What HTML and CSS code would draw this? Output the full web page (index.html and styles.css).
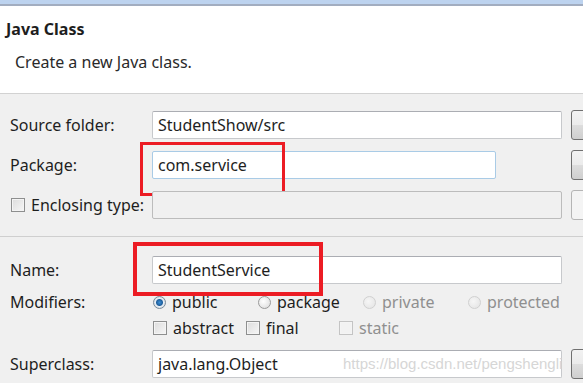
FILE: index.html
```html
<!DOCTYPE html>
<html lang="en">
<head>
    <meta charset="UTF-8">
    <title>New Java Class</title>
    <link rel="stylesheet" href="styles.css">
</head>
<body>
    <div class="titlebar"></div>

    <div class="header">
        <div class="header-title">Java Class</div>
        <div class="header-desc">Create a new Java class.</div>
    </div>

    <div class="group first">
        <div class="row">
            <div class="label">Source folder:</div>
            <div class="field"><div class="input">StudentShow/src</div></div>
            <div class="btn"></div>
        </div>
        <div class="row">
            <div class="label">Package:</div>
            <div class="field">
                <div class="input short focus">com.service</div>
                <div class="mark mark-package"></div>
            </div>
            <div class="btn"></div>
        </div>
        <div class="row">
            <div class="label"><span class="check"></span>Enclosing type:</div>
            <div class="field"><div class="input disabled"></div></div>
            <div class="btn disabled"></div>
        </div>
    </div>

    <div class="group second">
        <div class="row name">
            <div class="label">Name:</div>
            <div class="field">
                <div class="input">StudentService</div>
                <div class="mark mark-name"></div>
            </div>
        </div>
        <div class="row small">
            <div class="label">Modifiers:</div>
            <div class="options">
                <span class="radio-item"><span class="radio on"></span>public</span>
                <span class="radio-item"><span class="radio"></span>package</span>
                <span class="radio-item off"><span class="radio"></span>private</span>
                <span class="radio-item off"><span class="radio"></span>protected</span>
            </div>
        </div>
        <div class="row small">
            <div class="label"></div>
            <div class="options">
                <span class="check-item"><span class="check"></span>abstract</span>
                <span class="check-item"><span class="check"></span>final</span>
                <span class="check-item off"><span class="check"></span>static</span>
            </div>
        </div>
        <div class="row last">
            <div class="label">Superclass:</div>
            <div class="field">
                <div class="input">java.lang.Object</div>
                <div class="watermark">https://blog.csdn.net/pengshengli</div>
            </div>
            <div class="btn"></div>
        </div>
    </div>
</body>
</html>
```

FILE: styles.css
```css
body {
    margin: 0;
    width: 583px;
    height: 383px;
    overflow: hidden;
    background: #f0f0f0;
    font-family: "Noto Sans", "Open Sans", sans-serif;
    font-size: 16px;
    color: #1e1e1e;
}

.titlebar {
    height: 4px;
    background: #bdd3ef;
    border-bottom: 2px solid #a2adc0;
}

.header {
    height: 87px;
    background: #ffffff;
    border-bottom: 1px solid #d2d2d2;
}

.header-title {
    padding: 12px 0 0 6px;
    font-weight: bold;
    line-height: 22px;
}

.header-desc {
    padding: 11px 0 0 15px;
    line-height: 22px;
    color: #2a2a2a;
}

.group {
    padding-left: 10px;
}

.group.first {
    padding-top: 17px;
    padding-bottom: 5px;
    border-bottom: 1px solid #cfcfcf;
}

.group.second {
    padding-top: 19px;
}

.row {
    display: flex;
    align-items: center;
    height: 28px;
    margin-bottom: 12px;
}

.row.name {
    margin-bottom: 8px;
}

.row.small {
    height: 20px;
    margin-bottom: 6px;
}

.row.last {
    margin-top: 12px;
}

.label {
    width: 142px;
    flex-shrink: 0;
    display: flex;
    align-items: center;
}

.field {
    position: relative;
    width: 410px;
    flex-shrink: 0;
}

.input {
    box-sizing: border-box;
    height: 28px;
    padding-left: 5px;
    line-height: 26px;
    background: #ffffff;
    border: 1px solid #c7c9cc;
    border-top-color: #abadb3;
    border-radius: 2px;
}

.input.short {
    width: 344px;
}

.input.focus {
    border-color: #a9cbe6;
}

.input.disabled {
    background: #f0f0f0;
    border-color: #bcbcbc;
}

.btn {
    box-sizing: border-box;
    width: 80px;
    height: 30px;
    margin-left: 9px;
    flex-shrink: 0;
    border: 1px solid #707070;
    border-radius: 3px;
    background: linear-gradient(#f2f2f2, #ebebeb 50%, #dddddd 51%, #cfcfcf);
}

.btn.disabled {
    border-color: #b5b5b5;
    background: #f4f4f4;
}

.check {
    box-sizing: border-box;
    display: inline-block;
    width: 14px;
    height: 14px;
    margin-right: 6px;
    border: 1px solid #8e8f8f;
    background: linear-gradient(135deg, #dcdcdc, #f6f6f6);
    box-shadow: inset 0 0 0 1px #f4f4f4;
}

.label .check {
    margin-left: 1px;
}

.options {
    display: flex;
    align-items: center;
}

.radio-item,
.check-item {
    display: flex;
    align-items: center;
}

.radio-item {
    width: 104px;
    padding-left: 1px;
}

.check-item {
    width: 92px;
    padding-left: 1px;
}

.radio {
    box-sizing: border-box;
    width: 13px;
    height: 13px;
    margin-right: 6px;
    border: 1px solid #9a9a9a;
    border-radius: 50%;
    background: radial-gradient(circle at 40% 40%, #ffffff, #d8d8d8);
}

.radio.on {
    border-color: #7a8a99;
    background: radial-gradient(circle at 50% 50%, #3d8fd6 0, #1f5f9c 3px, #e8eef4 4px, #d4dce4 6px);
}

.radio-item.off,
.check-item.off {
    color: #8f8f8f;
}

.radio-item.off .radio {
    border-color: #d0d0d0;
    background: radial-gradient(circle at 40% 40%, #f6f6f6, #e2e2e2);
}

.check-item.off .check {
    border-color: #c4c4c4;
    background: #f2f2f2;
}

.mark {
    position: absolute;
    box-sizing: border-box;
    border: 3px solid #ec1c24;
}

.mark-package {
    top: -9px;
    left: -12px;
    width: 145px;
    height: 54px;
}

.mark-name {
    top: -14px;
    left: -19px;
    width: 190px;
    height: 54px;
    border-width: 4px;
}

.watermark {
    position: absolute;
    top: 5px;
    left: 191px;
    font-family: "Liberation Sans", Arial, sans-serif;
    font-size: 15px;
    color: #d6d6d6;
    white-space: nowrap;
}
```
